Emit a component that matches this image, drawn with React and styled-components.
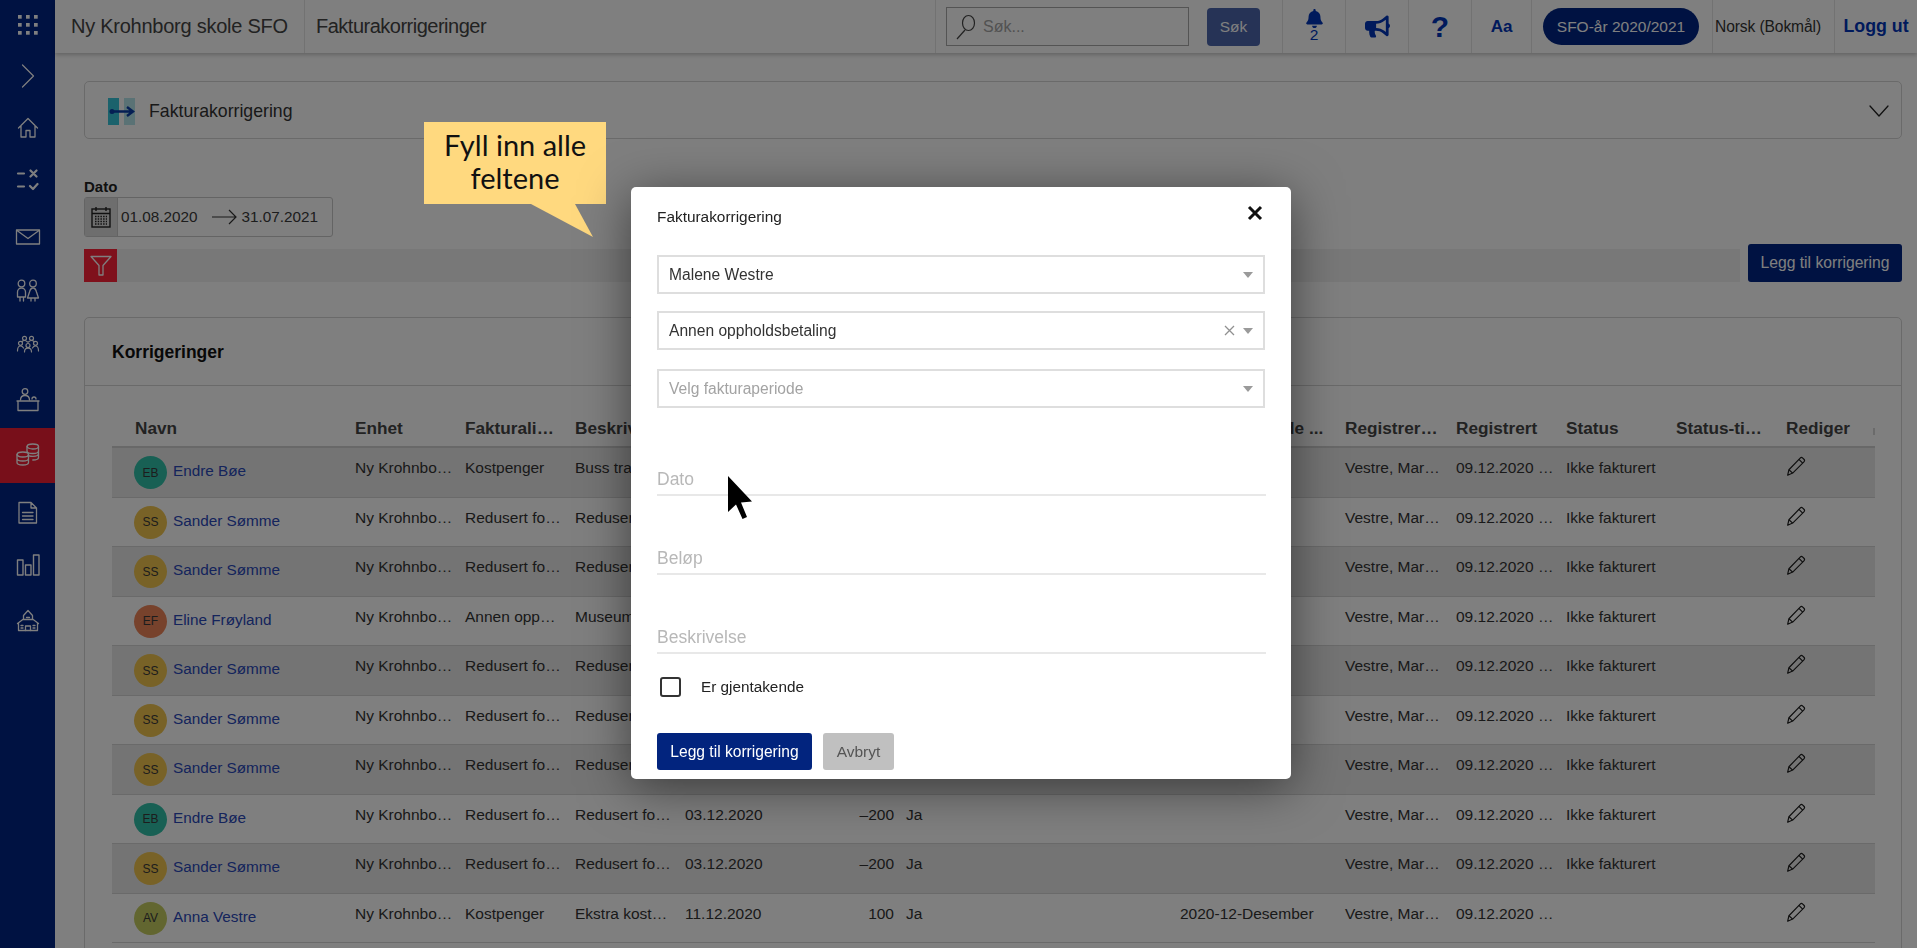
import React from 'react';
import styled, { createGlobalStyle } from 'styled-components';
import { FaBell, FaBullhorn } from 'react-icons/fa';

const navy = '#0034b8';

const GlobalStyle = createGlobalStyle`
  html, body, #root {
    margin: 0;
    height: 100%;
    overflow: hidden;
  }
  body {
    font-family: "Liberation Sans", Arial, sans-serif;
    background: #fff;
    color: #2c2c2c;
  }
  * { box-sizing: border-box; }
`;

const Shell = styled.div`
  display: flex;
  height: 948px;
  width: 1917px;
  overflow: hidden;
`;

const Sidebar = styled.nav`
  width: 55px;
  flex: none;
  background: #002484;
  display: flex;
  flex-direction: column;
`;

const SideTop = styled.div`
  height: 50px;
  display: flex;
  align-items: center;
  justify-content: center;
`;

const SideChevron = styled.div`
  height: 51px;
  display: flex;
  align-items: center;
  justify-content: center;
`;

const SideItem = styled.div`
  height: 54.5px;
  display: flex;
  align-items: center;
  justify-content: center;
  background: ${(p) => (p.$active ? '#f01e34' : 'transparent')};
`;

const Main = styled.div`
  flex: 1;
  min-width: 0;
  display: flex;
  flex-direction: column;
`;

const TopBar = styled.header`
  height: 53px;
  flex: none;
  display: flex;
  background: #fff;
  box-shadow: 0 2px 4px rgba(0, 0, 0, 0.22);
  position: relative;
`;

const TopCell = styled.div`
  width: ${(p) => p.$w}px;
  flex: none;
  display: flex;
  align-items: center;
  justify-content: ${(p) => p.$justify || 'center'};
  padding-left: ${(p) => p.$pad || 0}px;
  border-left: ${(p) => (p.$first ? 'none' : '1px solid #e4e4e4')};
`;

const SchoolName = styled.div`
  font-size: 20px;
  letter-spacing: ${(p) => p.$track}px;
  color: #444;
`;

const SearchBox = styled.div`
  width: 243px;
  height: 39px;
  border: 1.5px solid #a8a8a8;
  display: flex;
  align-items: center;
  gap: 6px;
  padding-left: 8px;
  font-size: 16px;
  color: #a4a4a4;
`;

const SearchButton = styled.button`
  width: 53px;
  height: 38px;
  margin-left: 18px;
  border: none;
  border-radius: 4px;
  background: #4c66ac;
  color: #fff;
  font: 15.5px "Liberation Sans", Arial, sans-serif;
`;

const BellWrap = styled.div`
  display: flex;
  flex-direction: column;
  align-items: center;
  color: ${navy};
  font-size: 15.5px;
  line-height: 12px;
  margin-top: -3px;
  gap: 1px;
`;

const HelpMark = styled.span`
  font-size: 30px;
  font-weight: 700;
  color: ${navy};
`;

const FontMark = styled.span`
  font-size: 17px;
  font-weight: 700;
  color: ${navy};
`;

const YearPill = styled.div`
  width: 156px;
  height: 37px;
  margin-right: 2px;
  border-radius: 19px;
  background: #002484;
  color: #fff;
  font-size: 15.5px;
  display: flex;
  align-items: center;
  justify-content: center;
`;

const Lang = styled.span`
  font-size: 15.6px;
  letter-spacing: -0.1px;
  color: #333;
`;

const Logout = styled.span`
  font-size: 17.8px;
  font-weight: 700;
  color: ${navy};
`;

const Content = styled.main`
  padding: 28px 15px 0 29px;
  display: flex;
  flex-direction: column;
`;

const Accordion = styled.section`
  height: 58px;
  border: 1px solid #d4d4d4;
  border-radius: 5px;
  display: flex;
  align-items: center;
  padding: 2px 12px 0 23px;
  font-size: 17.7px;
  color: #333;
`;

const AccordionTitle = styled.span`
  margin-left: 13px;
  flex: 1;
`;

const FieldLabel = styled.div`
  margin-top: 40px;
  font-size: 15px;
  line-height: 16px;
  font-weight: 700;
  color: #222;
`;

const DateRange = styled.div`
  margin-top: 2px;
  width: 249px;
  height: 40px;
  border: 1px solid #c8c8c8;
  border-radius: 3px;
  display: flex;
  align-items: center;
  font-size: 15.3px;
  color: #3a3a3a;
`;

const DateAddon = styled.div`
  width: 33px;
  height: 38px;
  flex: none;
  background: #dcdcdc;
  border-right: 1px solid #c8c8c8;
  display: flex;
  align-items: center;
  justify-content: center;
  margin-right: 3px;
`;

const DateArrow = styled.svg`
  margin: 0 5px 0 14px;
`;

const FilterRow = styled.div`
  margin-top: 7px;
  height: 38px;
  display: flex;
  align-items: flex-end;
  gap: 8px;
`;

const FilterBar = styled.div`
  flex: 1;
  height: 33px;
  background: #f0f0f0;
  display: flex;
`;

const FilterToggle = styled.div`
  width: 33px;
  height: 33px;
  background: #fe2238;
  display: flex;
  align-items: center;
  justify-content: center;
`;

const AddButton = styled.button`
  width: 154px;
  height: 38px;
  border: none;
  border-radius: 3px;
  background: #002484;
  color: #fff;
  font: 15.7px "Liberation Sans", Arial, sans-serif;
`;

const Card = styled.section`
  margin-top: 35px;
  border: 1px solid #d4d4d4;
  border-radius: 5px 5px 0 0;
  height: 700px;
`;

const CardHeader = styled.div`
  height: 68px;
  border-bottom: 1px solid #d4d4d4;
  padding: 2px 0 0 27px;
  display: flex;
  align-items: center;
  font-size: 17.5px;
  font-weight: 700;
  color: #111;
`;

const Table = styled.div`
  margin: 25px 26px 0 27px;
`;

const columns = '233px 110px 110px 110px 110px 111px 274px 165px 111px 110px 110px 110px 99px';

const HeadRow = styled.div`
  display: grid;
  grid-template-columns: ${columns};
  height: 37px;
  border-bottom: 2px solid #d0d0d0;
  align-items: center;
  position: relative;

  &::after {
    content: '';
    position: absolute;
    right: 0;
    top: 17px;
    width: 2px;
    height: 7px;
    background: #d6d6d6;
  }
`;

const HeadCell = styled.div`
  padding: 0 5px 0 ${(p) => (p.$first ? 23 : 10)}px;
  font-size: 17.2px;
  font-weight: 700;
  color: #444;
  white-space: nowrap;
  overflow: hidden;
  text-overflow: ellipsis;
`;

const Row = styled.div`
  display: grid;
  grid-template-columns: ${columns};
  height: 49.5px;
  border-bottom: 1px solid #d4d4d4;
  background: ${(p) => (p.$dark ? '#e9e9e9' : 'transparent')};
`;

const Cell = styled.div`
  padding: 11px ${(p) => p.$pr || 2}px 0 10px;
  font-size: 15.5px;
  line-height: 18px;
  color: #333;
  white-space: nowrap;
  overflow: hidden;
  text-overflow: ellipsis;
  text-align: ${(p) => (p.$right ? 'right' : 'left')};
`;

const NameCell = styled.div`
  padding: 0 0 0 22px;
  display: flex;
  align-items: center;
  gap: 6px;
  margin-top: 1px;
`;

const Avatar = styled.div`
  width: 33px;
  height: 33px;
  border-radius: 50%;
  flex: none;
  background: ${(p) => p.$bg};
  color: #3a3a3a;
  font-size: 12px;
  display: flex;
  align-items: center;
  justify-content: center;
`;

const NameLink = styled.span`
  font-size: 15.3px;
  color: #2a48b8;
  margin-top: -3px;
`;

const EditIcon = styled.div`
  padding: 8px 0 0 10px;
`;

const Overlay = styled.div`
  position: fixed;
  inset: 0;
  background: rgba(0, 0, 0, 0.5);
  z-index: 10;
`;

const Callout = styled.div`
  position: fixed;
  left: 424px;
  top: 122px;
  width: 182px;
  height: 82px;
  padding-bottom: 4px;
  background: #ffd97f;
  z-index: 11;
  display: flex;
  align-items: center;
  justify-content: center;
  text-align: center;
  font-family: Lato, "Noto Sans", sans-serif;
  font-size: 29px;
  line-height: 33px;
  color: #111;
`;

const CalloutTail = styled.div`
  position: absolute;
  left: 107px;
  top: 82px;
  width: 62px;
  height: 33px;
  background: #ffd97f;
  clip-path: polygon(0 0, 71% 0, 100% 100%);
`;

const Modal = styled.div`
  position: fixed;
  left: 631px;
  top: 187px;
  width: 660px;
  height: 592px;
  background: #fff;
  border-radius: 5px;
  box-shadow: 0 8px 50px rgba(0, 0, 0, 0.5);
  z-index: 11;
  padding: 0 26px;
  display: flex;
  flex-direction: column;
`;

const ModalHead = styled.div`
  height: 68px;
  display: flex;
  justify-content: space-between;
  align-items: flex-start;
  padding: 21px 2px 0 0;
  font-size: 15.4px;
  line-height: 18px;
  color: #222;
`;

const CloseMark = styled.svg`
  margin-top: -3px;
`;

const SelectBox = styled.div`
  height: 39px;
  margin-bottom: ${(p) => p.$mb}px;
  border: 2px solid #dedede;
  display: flex;
  align-items: center;
  padding: 0 10px;
  font-size: 15.6px;
  color: ${(p) => (p.$placeholder ? '#a3a3a3' : '#333')};
`;

const SelectText = styled.span`
  flex: 1;
`;

const ClearMark = styled.svg`
  margin-right: 8px;
`;

const Caret = styled.span`
  width: 0;
  height: 0;
  border-left: 5.5px solid transparent;
  border-right: 5.5px solid transparent;
  border-top: 6px solid #9a9a9a;
`;

const UnderlineField = styled.div`
  height: ${(p) => p.$h}px;
  width: 609px;
  border-bottom: 2px solid #e8e8e8;
  display: flex;
  align-items: flex-end;
  padding: 0 0 3px 0;
  font-size: 17.5px;
  line-height: 24px;
  color: #b8b8b8;
`;

const CheckRow = styled.label`
  display: flex;
  align-items: center;
  margin-top: 23px;
  padding-left: 3px;
  font-size: 15.3px;
  color: #222;
`;

const CheckBox = styled.span`
  width: 21px;
  height: 20px;
  border: 2px solid #333;
  border-radius: 3px;
  margin-right: 20px;
`;

const ModalActions = styled.div`
  display: flex;
  gap: 11px;
  margin-top: 36px;
`;

const PrimaryButton = styled.button`
  width: 155px;
  height: 37px;
  border: none;
  border-radius: 3px;
  background: #02247e;
  color: #fff;
  font: 15.6px "Liberation Sans", Arial, sans-serif;
`;

const CancelButton = styled.button`
  width: 71px;
  height: 37px;
  border: none;
  border-radius: 3px;
  background: #c0c0c0;
  color: #555;
  font: 15.5px "Liberation Sans", Arial, sans-serif;
`;

const Cursor = styled.svg`
  position: fixed;
  left: 726px;
  top: 475px;
  z-index: 12;
`;

const Stroke = ({ children, w = 28, h = 28, sw = 1.3 }) => (
  <svg width={w} height={h} viewBox={`0 0 ${w} ${h}`} fill="none" stroke="#fff" strokeWidth={sw} strokeLinecap="round" strokeLinejoin="round">
    {children}
  </svg>
);

const GridIcon = () => (
  <svg width="20" height="20" viewBox="0 0 20 20" fill="#fff">
    {[0, 8, 16].map((y) => [0, 8, 16].map((x) => <rect key={`${x}-${y}`} x={x} y={y} width="3.7" height="3.7" />))}
  </svg>
);

const sideIcons = [
  <Stroke key="home">
    <path d="M4.500 14 14 4.500 23.500 14M7 11.500V23h5v-6.500h4V23h5V11.500" />
  </Stroke>,
  <Stroke key="calc" sw={2.2}>
    <path d="M4 4.500h6M4 17.500h6M16.500 1.500l6 6M22.500 1.500l-6 6M16 17l3 3 4.500-5" />
  </Stroke>,
  <Stroke key="mail">
    <rect x="2.500" y="7" width="23" height="14" />
    <path d="M3 7.500 14 15.500 25 7.500" />
  </Stroke>,
  <Stroke key="kids">
    <circle cx="7.500" cy="5.500" r="3.300" />
    <circle cx="19" cy="5.500" r="3.300" />
    <path d="M3.500 19v-5a4 4 0 0 1 8 0v5ZM6 19v4M9.500 19v4" />
    <path d="M19 10c2 0 3 2 3.500 4l2 6h-11l2-6c.5-2 1.500-4 3.500-4ZM17 20v3M21 20v3" />
  </Stroke>,
  <Stroke key="group" sw={1.2}>
    <circle cx="10.500" cy="6.300" r="2" />
    <circle cx="17.500" cy="6.300" r="2" />
    <circle cx="6.500" cy="11.300" r="2" />
    <circle cx="21.500" cy="11.300" r="2" />
    <circle cx="14" cy="13.500" r="2" />
    <path d="M3.500 19c0-3 1.200-5 3-5s2.500 1 3 2M24.500 19c0-3-1.200-5-3-5s-2.500 1-3 2M10.500 20c0-2.500 1.500-3.800 3.500-3.800s3.500 1.300 3.500 3.800M8 9.500c.5-.5 1.500-1 2.500-1s2 .5 3 1.500M14.500 10c1-1 2-1.500 3-1.500s2 .5 2.500 1" />
  </Stroke>,
  <Stroke key="desk">
    <circle cx="11" cy="4.500" r="2.800" />
    <path d="M6.500 13c0-3 2-4.500 4.500-4.500s4.500 1.500 4.500 4.500M18 12a2 2 0 0 1 4 0" />
    <path d="M3 14h22M4 14v9.500h20V14" />
  </Stroke>,
  <Stroke key="coins">
    <ellipse cx="18.800" cy="5.500" rx="5.700" ry="2.500" />
    <path d="M13 5.500v10M24.500 5.500v11c0 1.400-2.500 2.500-5.700 2.500M13 10c0 1.400 2.600 2.500 5.800 2.500s5.700-1.100 5.700-2.500M15 14.800c1 .3 2.400.5 3.800.5 3.200 0 5.700-1.100 5.700-2.500" />
    <ellipse cx="8.800" cy="13.500" rx="5.700" ry="2.500" fill="#f01e34" />
    <path d="M3 13.500v8c0 1.400 2.600 2.500 5.800 2.500s5.700-1.100 5.700-2.500v-8M3 17.500c0 1.400 2.600 2.500 5.800 2.500s5.700-1.100 5.700-2.500" />
  </Stroke>,
  <Stroke key="doc">
    <path d="M5 6.500h12l5.500 5.500v15H5ZM17 6.500V12h5.500M8.500 16.500h10.500M8.500 20h10.500M8.500 23.500h10.500" />
  </Stroke>,
  <Stroke key="chart" sw={1.4}>
    <rect x="3.500" y="10" width="5.500" height="15" />
    <rect x="11.500" y="15" width="5.500" height="10" />
    <rect x="19.500" y="5" width="5.500" height="20" />
  </Stroke>,
  <Stroke key="school">
    <path d="M14 5.500 9.500 10.500v4h9v-4ZM3.500 18.500l6-4.500M24.500 18.500l-6-4.500M4.500 18v7.500h19V18" />
    <path d="M11.500 25.500V21h5v4.500M7 20.500h2M19 20.500h2M7 23h2M19 23h2M12.500 12.500h3" />
  </Stroke>,
];

const SearchGlass = () => (
  <svg width="22" height="26" viewBox="0 0 22 26" fill="none" stroke="#444" strokeWidth="1.2">
    <ellipse cx="13.500" cy="9" rx="6" ry="7.500" />
    <path d="M10 16 2 25" />
  </svg>
);

const HLogo = () => (
  <svg width="28" height="27" viewBox="0 0 28 27">
    <rect x="0" y="0" width="11" height="27" fill="#36c4d8" />
    <rect x="16" y="0" width="11" height="27" fill="#b4e4ea" />
    <path d="M3 13.500h21M19 9l6 4.500-6 4.500" fill="none" stroke="#0a3ea8" strokeWidth="2.400" />
    <circle cx="4" cy="13.500" r="2.500" fill="#0a3ea8" />
  </svg>
);

const CalendarIcon = () => (
  <svg width="20" height="22" viewBox="0 0 20 22" fill="none" stroke="#222" strokeWidth="1.400">
    <rect x="1" y="3" width="18" height="18" />
    <path d="M1 7.500h18M5 1v4M15 1v4" />
    <path d="M4 10.500h12M4 13h12M4 15.500h12M4 18h12" strokeDasharray="1.500 1.200" />
  </svg>
);

const PencilIcon = () => (
  <svg width="20" height="20" viewBox="0 0 24 24" fill="none" stroke="#1c1c1c" strokeWidth="1.400" strokeLinejoin="round">
    <path d="M2 23l1.500-6.500L17 2.500a2.200 2.200 0 0 1 3.100 0l1.400 1.400a2.200 2.200 0 0 1 0 3.100L8 20.500Z" />
    <path d="M3.500 16.500 8 20.500M15.500 4l4.500 4.500" />
  </svg>
);

const avatarColors = { EB: '#30c0a8', SS: '#f0c44e', EF: '#ee8458', AV: '#c4cc60' };

const rows = [
  ['EB', 'Endre Bøe', 'Kostpenger', 'Buss transport'],
  ['SS', 'Sander Sømme', 'Redusert fortjeneste', 'Redusert fortjeneste', '03.12.2020', '–200'],
  ['SS', 'Sander Sømme', 'Redusert fortjeneste', 'Redusert fortjeneste', '03.12.2020', '–200'],
  ['EF', 'Eline Frøyland', 'Annen oppholdsbetaling', 'Museumsbesøk', '03.12.2020', '100'],
  ['SS', 'Sander Sømme', 'Redusert fortjeneste', 'Redusert fortjeneste', '03.12.2020', '–200'],
  ['SS', 'Sander Sømme', 'Redusert fortjeneste', 'Redusert fortjeneste', '03.12.2020', '–200'],
  ['SS', 'Sander Sømme', 'Redusert fortjeneste', 'Redusert fortjeneste', '03.12.2020', '–200'],
  ['EB', 'Endre Bøe', 'Redusert fortjeneste', 'Redusert fortjeneste', '03.12.2020', '–200'],
  ['SS', 'Sander Sømme', 'Redusert fortjeneste', 'Redusert fortjeneste', '03.12.2020', '–200'],
  ['AV', 'Anna Vestre', 'Kostpenger', 'Ekstra kostpenger', '11.12.2020', '100', '2020-12-Desember', ''],
];

const headers = ['Navn', 'Enhet', 'Fakturalinjetype', 'Beskrivelse', 'Dato', 'Beløp', 'Er gjentakende', 'Fakturaperiode ...', 'Registrert av', 'Registrert', 'Status', 'Status-tidspunkt', 'Rediger'];

const App = () => {
  return (
    <>
      <GlobalStyle />
      <Shell>
        <Sidebar>
          <SideTop><GridIcon /></SideTop>
          <SideChevron>
            <Stroke w={14} h={24} sw={1.2}><path d="m1.500 1 11 11-11 11" /></Stroke>
          </SideChevron>
          {sideIcons.map((icon, i) => (
            <SideItem key={i} $active={i === 6}>{icon}</SideItem>
          ))}
        </Sidebar>
        <Main>
          <TopBar>
            <TopCell $w={249} $justify="flex-start" $pad={16} $first><SchoolName $track={-0.25}>Ny Krohnborg skole SFO</SchoolName></TopCell>
            <TopCell $w={631} $justify="flex-start" $pad={11}><SchoolName $track={-0.5}>Fakturakorrigeringer</SchoolName></TopCell>
            <TopCell $w={347} $justify="flex-start" $pad={10}>
              <SearchBox><SearchGlass />Søk...</SearchBox>
              <SearchButton>Søk</SearchButton>
            </TopCell>
            <TopCell $w={63}><BellWrap><FaBell size={19} />2</BellWrap></TopCell>
            <TopCell $w={63}><FaBullhorn size={25} color={navy} /></TopCell>
            <TopCell $w={63}><HelpMark>?</HelpMark></TopCell>
            <TopCell $w={60}><FontMark>Aa</FontMark></TopCell>
            <TopCell $w={181}><YearPill>SFO-år 2020/2021</YearPill></TopCell>
            <TopCell $w={122} $justify="flex-start" $pad={2}><Lang>Norsk (Bokmål)</Lang></TopCell>
            <TopCell $w={83}><Logout>Logg ut</Logout></TopCell>
          </TopBar>
          <Content>
            <Accordion>
              <HLogo />
              <AccordionTitle>Fakturakorrigering</AccordionTitle>
              <Stroke w={20} h={12} sw={1.3}>
                <path d="m1 1 9 10 9-10" stroke="#222" />
              </Stroke>
            </Accordion>
            <FieldLabel>Dato</FieldLabel>
            <DateRange>
              <DateAddon><CalendarIcon /></DateAddon>
              01.08.2020
              <DateArrow width="25" height="16" viewBox="0 0 25 16" fill="none" stroke="#333" strokeWidth="1.200">
                <path d="M0 8h24M17 1l7 7-7 7" />
              </DateArrow>
              31.07.2021
            </DateRange>
            <FilterRow>
              <FilterBar>
                <FilterToggle>
                  <Stroke w={24} h={22} sw={1.3}><path d="M2 1.500h20l-8 9v9.500h-4v-9.500Z" /></Stroke>
                </FilterToggle>
              </FilterBar>
              <AddButton>Legg til korrigering</AddButton>
            </FilterRow>
            <Card>
              <CardHeader>Korrigeringer</CardHeader>
              <Table>
                <HeadRow>
                  {headers.map((h, i) => (
                    <HeadCell key={h} $first={i === 0}>{h}</HeadCell>
                  ))}
                </HeadRow>
                {rows.map(([init, name, line, desc, date, amount, period, status], i) => (
                  <Row key={i} $dark={i % 2 === 0}>
                    <NameCell>
                      <Avatar $bg={avatarColors[init]}>{init}</Avatar>
                      <NameLink>{name}</NameLink>
                    </NameCell>
                    <Cell>Ny Krohnborg skole SFO</Cell>
                    <Cell>{line}</Cell>
                    <Cell>{desc}</Cell>
                    <Cell>{date || '03.12.2020'}</Cell>
                    <Cell $right>{amount || '–200'}</Cell>
                    <Cell>Ja</Cell>
                    <Cell>{period}</Cell>
                    <Cell $pr={6}>Vestre, Marianne</Cell>
                    <Cell>09.12.2020 10:15</Cell>
                    <Cell>{status === undefined ? 'Ikke fakturert' : status}</Cell>
                    <Cell />
                    <EditIcon><PencilIcon /></EditIcon>
                  </Row>
                ))}
              </Table>
            </Card>
          </Content>
        </Main>
      </Shell>
      <Overlay />
      <Callout>
        <span>Fyll inn alle<br />feltene</span>
        <CalloutTail />
      </Callout>
      <Modal>
        <ModalHead>
          Fakturakorrigering
          <CloseMark width="16" height="16" viewBox="0 0 16 16" stroke="#111" strokeWidth="3">
            <path d="m2 2 12 12M14 2 2 14" />
          </CloseMark>
        </ModalHead>
        <SelectBox $mb={17}>
          <SelectText>Malene Westre</SelectText>
          <Caret />
        </SelectBox>
        <SelectBox $mb={19}>
          <SelectText>Annen oppholdsbetaling</SelectText>
          <ClearMark width="11" height="11" viewBox="0 0 11 11" stroke="#909090" strokeWidth="1.300">
            <path d="m1 1 9 9M10 1l-9 9" />
          </ClearMark>
          <Caret />
        </SelectBox>
        <SelectBox $placeholder $mb={1}>
          <SelectText>Velg fakturaperiode</SelectText>
          <Caret />
        </SelectBox>
        <UnderlineField $h={87}>Dato</UnderlineField>
        <UnderlineField $h={79}>Beløp</UnderlineField>
        <UnderlineField $h={79}>Beskrivelse</UnderlineField>
        <CheckRow><CheckBox />Er gjentakende</CheckRow>
        <ModalActions>
          <PrimaryButton>Legg til korrigering</PrimaryButton>
          <CancelButton>Avbryt</CancelButton>
        </ModalActions>
      </Modal>
      <Cursor width="28" height="46" viewBox="0 0 28 46" fill="#000">
        <path d="M2 1 L2 37 L10 29.500 L16.500 44 L21 42 L15 27.500 L26 26.500 Z" />
      </Cursor>
    </>
  );
};

export default App;
